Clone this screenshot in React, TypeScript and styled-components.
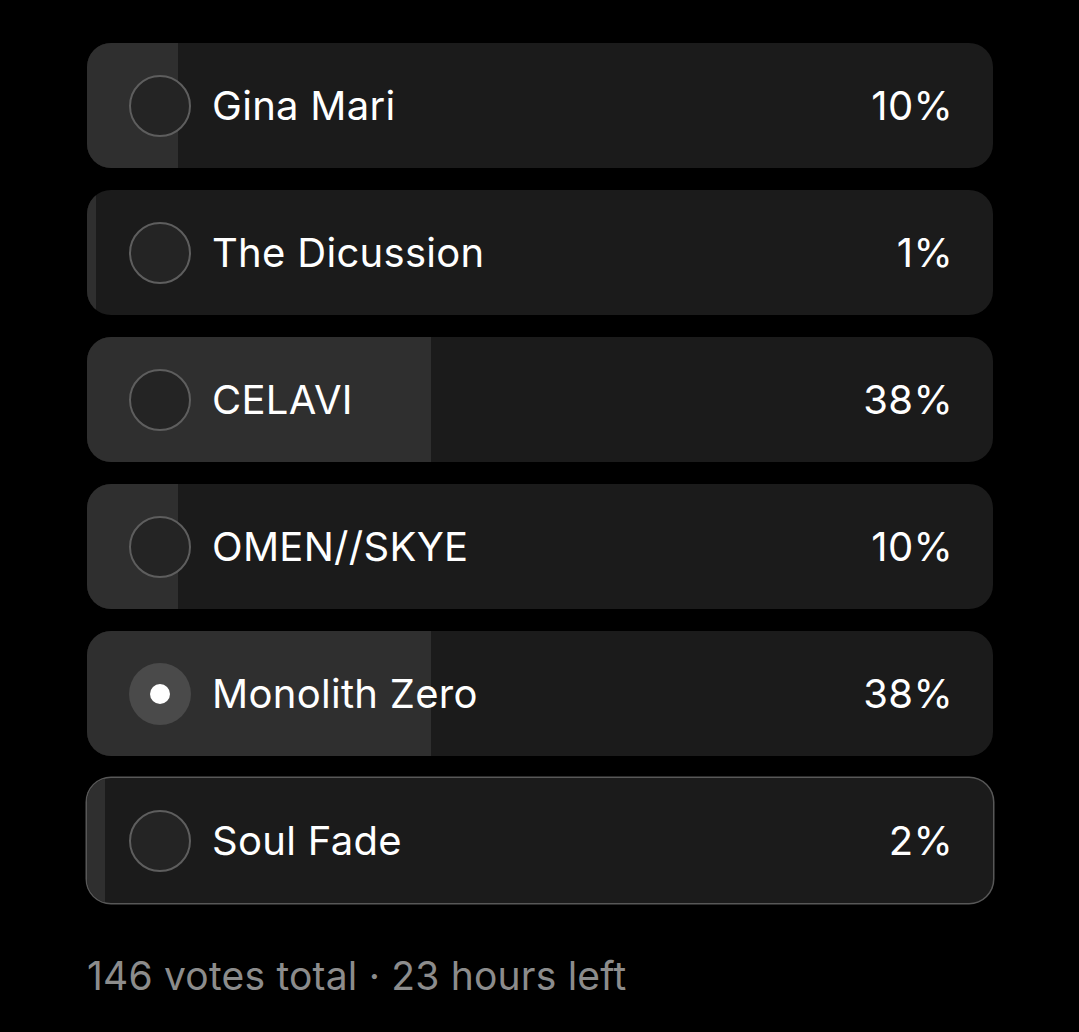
import styled, { createGlobalStyle } from "styled-components";

const Global = createGlobalStyle`
  html, body {
    margin: 0;
    background: #000;
  }
  body {
    font-family: Inter, "Noto Sans", "Liberation Sans", sans-serif;
  }
`;

interface Option {
  label: string;
  percent: number;
  selected?: boolean;
  voted?: boolean;
}

const options: Option[] = [
  { label: "Gina Mari", percent: 10 },
  { label: "The Dicussion", percent: 1 },
  { label: "CELAVI", percent: 38 },
  { label: "OMEN//SKYE", percent: 10 },
  { label: "Monolith Zero", percent: 38, selected: true },
  { label: "Soul Fade", percent: 2, voted: true },
];

const Page = styled.div`
  padding: 43px 86px 0 87px;
  width: 906px;
`;

const List = styled.div`
  display: flex;
  flex-direction: column;
  gap: 22px;
`;

const Row = styled.div<{ $outlined?: boolean }>`
  position: relative;
  height: 125px;
  border-radius: 24px;
  background: #1b1b1b;
  overflow: hidden;
  display: flex;
  align-items: center;
  padding: 0 40px 0 42px;
  box-shadow: ${(p) => (p.$outlined ? "0 0 0 1.5px #585858" : "none")};
`;

const Fill = styled.div`
  position: absolute;
  left: 0;
  top: 0;
  bottom: 0;
  background: #2f2f2f;
`;

const Radio = styled.div<{ $selected?: boolean }>`
  position: relative;
  width: 62px;
  height: 62px;
  box-sizing: border-box;
  border-radius: 50%;
  flex-shrink: 0;
  display: flex;
  align-items: center;
  justify-content: center;
  background: ${(p) => (p.$selected ? "#4a4a4a" : "#242424")};
  border: ${(p) => (p.$selected ? "none" : "2px solid #5e5e5e")};
`;

const Dot = styled.div`
  width: 20px;
  height: 20px;
  border-radius: 50%;
  background: #fff;
`;

const Label = styled.div`
  position: relative;
  flex: 1;
  margin-left: 21px;
  color: #fff;
  font-size: 40px;
  letter-spacing: 0.3px;
`;

const Percent = styled.div`
  position: relative;
  color: #fff;
  font-size: 40px;
  letter-spacing: 0.3px;
`;

const Footer = styled.div`
  margin-top: 49px;
  color: #8c8c8c;
  font-size: 39px;
  letter-spacing: 0.2px;
`;

export default function App() {
  return (
    <Page>
      <Global />
      <List>
        {options.map((o) => (
          <Row key={o.label} $outlined={o.voted}>
            <Fill style={{ width: `${o.percent}%` }} />
            <Radio $selected={o.selected}>{o.selected && <Dot />}</Radio>
            <Label>{o.label}</Label>
            <Percent>{o.percent}%</Percent>
          </Row>
        ))}
      </List>
      <Footer>146 votes total · 23 hours left</Footer>
    </Page>
  );
}
